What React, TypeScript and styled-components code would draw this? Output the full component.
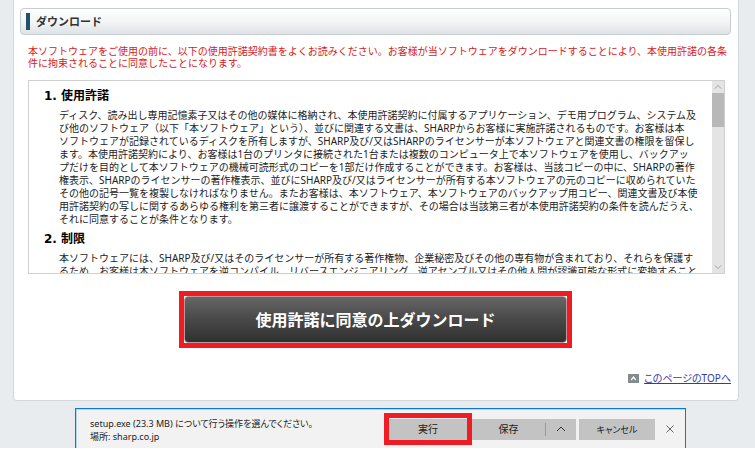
import React from "react";
import styled, { createGlobalStyle, css } from "styled-components";

const GlobalStyle = createGlobalStyle`
  *, *::before, *::after { box-sizing: border-box; }
  body {
    margin: 0;
    background: #fff;
    font-family: "Noto Sans", "Noto Sans CJK JP", sans-serif;
    font-size: 10px;
    line-height: 13px;
    color: #222;
  }
  button { font: inherit; color: inherit; padding: 0; border: 0; cursor: pointer; }
  h2, h3, p { margin: 0; }
`;

const Page = styled.div`
  background: #e8ecef;
  overflow: hidden;
`;

const Panel = styled.main`
  margin: 0 16px 0 13px;
  padding: 8px 7px 15px 6px;
  background: #fff;
  border: 1px solid #d2d9dd;
  border-top: 0;
  border-radius: 0 0 4px 4px;
`;

const SectionHeader = styled.header`
  display: flex;
  align-items: center;
  gap: 6px;
  height: 27px;
  padding: 0 5px;
  border: 1px solid #c6cdd1;
  border-radius: 4px;
  background: linear-gradient(#fff, #f3f5f6 50%, #dfe3e6);

  &::before {
    content: "";
    width: 4px;
    height: 17px;
    background: #1f5365;
  }
`;

const SectionTitle = styled.h2`
  font-size: 11px;
  line-height: 16px;
  font-weight: 700;
  color: #333;
`;

const Line = styled.span`
  display: block;
  white-space: nowrap;
`;

const Notice = styled.p`
  margin: 10px 8px 11px;
  line-height: 12px;
  color: #d7191c;
`;

const License = styled.section`
  display: flex;
  height: 194px;
  margin: 0 6px 0 8px;
  border: 1px solid #d0d0d0;
`;

const LicenseText = styled.div`
  flex: 1;
  min-width: 0;
  overflow: hidden;
  padding: 7px 0 0 15px;
`;

const Heading = styled.h3`
  font-family: "DejaVu Sans", "Noto Sans CJK JP", sans-serif;
  font-size: 12px;
  line-height: 16px;
  color: #000;
`;

const Clause = styled.p`
  padding: 5px 0 5px 15px;
`;

const ScrollTrack = styled.div`
  display: flex;
  flex-direction: column;
  width: 12px;
  background: #e4e4e4;
`;

const ScrollArrow = styled.button`
  display: grid;
  place-items: center;
  height: 12px;
  background: none;
  color: #888;
`;

const ScrollThumb = styled.div`
  height: 34px;
  margin-bottom: auto;
  background: #b8b8b8;
`;

const highlight = css`
  border: 5px solid #ee1c25;
`;

const DownloadRow = styled.div`
  display: flex;
  justify-content: center;
  margin: 17px 0 24px;
`;

const DownloadFrame = styled.div`
  ${highlight}
  width: 393px;
  background: #fff;
`;

const DownloadButton = styled.button`
  display: block;
  width: 100%;
  height: 47px;
  border: 1px solid #b99;
  border-radius: 4px;
  background: linear-gradient(#666, #484848 50%, #303030);
  color: #fff;
  font-size: 16px;
  line-height: 24px;
  font-weight: 700;
`;

const TopLinkRow = styled.div`
  display: flex;
  justify-content: flex-end;
  align-items: center;
  gap: 5px;
`;

const TopLink = styled.a`
  font-feature-settings: "palt";
  color: #3939a5;
  text-decoration: underline;
`;

const DownloadBar = styled.aside`
  display: flex;
  align-items: flex-start;
  height: 40px;
  margin: 7px 69px 0 75px;
  padding: 4px 3px 0 14px;
  border: 1px solid #0a78d4;
  border-bottom: 0;
  box-shadow: inset 0 1px #b5d6ef, inset 1px 0 #b5d6ef;
  background: #f2f2f2;
  font-feature-settings: "palt";
`;

const BarMessage = styled.p`
  flex: 1;
  padding-top: 4px;
  font-size: 9px;
`;

const BarActions = styled.div`
  display: flex;
  align-items: center;
`;

const BarButton = styled.button<{ $width: number; $divided?: boolean }>`
  display: grid;
  place-items: center;
  width: ${(p) => p.$width}px;
  height: 21px;
  background: #c3c3c3;
  ${(p) =>
    p.$divided &&
    css`
      background: linear-gradient(#999, #999) 0 50% / 1px 13px no-repeat #c3c3c3;
    `}
`;

const RunFrame = styled.div`
  ${highlight}
  padding: 1px 0 0;
  background: #eee;
`;

const CancelButton = styled(BarButton)`
  margin-left: 3px;
  font-size: 9px;
`;

const CloseButton = styled(BarButton)`
  margin-left: 3px;
  background: none;
`;

const Chevron = ({ size, down = false }: { size: number; down?: boolean }) => (
  <svg width={size} height={size} viewBox="0 0 10 10" fill="none" stroke="currentColor" aria-hidden="true">
    <path d={down ? "M1 3l4 4 4-4" : "M1 7l4-4 4 4"} strokeWidth="0.9" />
  </svg>
);

const notice = [
  "本ソフトウェアをご使用の前に、以下の使用許諾契約書をよくお読みください。お客様が当ソフトウェアをダウンロードすることにより、本使用許諾の各条",
  "件に拘束されることに同意したことになります。",
];

const clauses = [
  {
    title: "1. 使用許諾",
    lines: [
      "ディスク、読み出し専用記憶素子又はその他の媒体に格納され、本使用許諾契約に付属するアプリケーション、デモ用プログラム、システム及",
      "び他のソフトウェア（以下「本ソフトウェア」という）、並びに関連する文書は、SHARPからお客様に実施許諾されるものです。お客様は本",
      "ソフトウェアが記録されているディスクを所有しますが、SHARP及び/又はSHARPのライセンサーが本ソフトウェアと関連文書の権限を留保し",
      "ます。本使用許諾契約により、お客様は1台のプリンタに接続された1台または複数のコンピュータ上で本ソフトウェアを使用し、バックアッ",
      "プだけを目的として本ソフトウェアの機械可読形式のコピーを1部だけ作成することができます。お客様は、当該コピーの中に、SHARPの著作",
      "権表示、SHARPのライセンサーの著作権表示、並びにSHARP及び/又はライセンサーが所有する本ソフトウェアの元のコピーに収められていた",
      "その他の記号一覧を複製しなければなりません。またお客様は、本ソフトウェア、本ソフトウェアのバックアップ用コピー、関連文書及び本使",
      "用許諾契約の写しに関するあらゆる権利を第三者に譲渡することができますが、その場合は当該第三者が本使用許諾契約の条件を読んだうえ、",
      "それに同意することが条件となります。",
    ],
  },
  {
    title: "2. 制限",
    lines: [
      "本ソフトウェアには、SHARP及び/又はそのライセンサーが所有する著作権物、企業秘密及びその他の専有物が含まれており、それらを保護す",
      "るため、お客様は本ソフトウェアを逆コンパイル、リバースエンジニアリング、逆アセンブル又はその他人間が認識可能な形式に変換すること",
    ],
  },
];

const Lines = ({ lines }: { lines: string[] }) => (
  <>
    {lines.map((line) => (
      <Line key={line}>{line}</Line>
    ))}
  </>
);

export default function App() {
  return (
    <>
      <GlobalStyle />
      <Page>
        <Panel>
          <SectionHeader>
            <SectionTitle>ダウンロード</SectionTitle>
          </SectionHeader>
          <Notice>
            <Lines lines={notice} />
          </Notice>
          <License aria-label="使用許諾契約書">
            <LicenseText>
              {clauses.map((clause) => (
                <React.Fragment key={clause.title}>
                  <Heading>{clause.title}</Heading>
                  <Clause>
                    <Lines lines={clause.lines} />
                  </Clause>
                </React.Fragment>
              ))}
            </LicenseText>
            <ScrollTrack>
              <ScrollArrow type="button" aria-label="上へ">
                <Chevron size={8} />
              </ScrollArrow>
              <ScrollThumb />
              <ScrollArrow type="button" aria-label="下へ">
                <Chevron size={8} down />
              </ScrollArrow>
            </ScrollTrack>
          </License>
          <DownloadRow>
            <DownloadFrame>
              <DownloadButton type="button">使用許諾に同意の上ダウンロード</DownloadButton>
            </DownloadFrame>
          </DownloadRow>
          <TopLinkRow>
            <svg width="11" height="9" viewBox="0 0 11 9" aria-hidden="true">
              <rect width="11" height="9" fill="#838b8f" />
              <path d="M3.2 6l2.3-3 2.3 3" fill="none" stroke="#fff" strokeWidth="1.3" />
            </svg>
            <TopLink href="#top">このページのTOPへ</TopLink>
          </TopLinkRow>
        </Panel>
        <DownloadBar>
          <BarMessage>
            <Line>setup.exe (23.3 MB) について行う操作を選んでください。</Line>
            <Line>場所: sharp.co.jp</Line>
          </BarMessage>
          <BarActions>
            <RunFrame>
              <BarButton type="button" $width={78}>実行</BarButton>
            </RunFrame>
            <BarButton type="button" $width={73}>保存</BarButton>
            <BarButton type="button" $width={31} $divided aria-label="保存オプション">
              <Chevron size={10} />
            </BarButton>
            <CancelButton type="button" $width={76}>キャンセル</CancelButton>
            <CloseButton type="button" $width={24} aria-label="閉じる">
              <svg width="8" height="8" viewBox="0 0 8 8" stroke="#666" aria-hidden="true">
                <path d="M.5 .5l7 7M7.5 .5l-7 7" />
              </svg>
            </CloseButton>
          </BarActions>
        </DownloadBar>
      </Page>
    </>
  );
}
